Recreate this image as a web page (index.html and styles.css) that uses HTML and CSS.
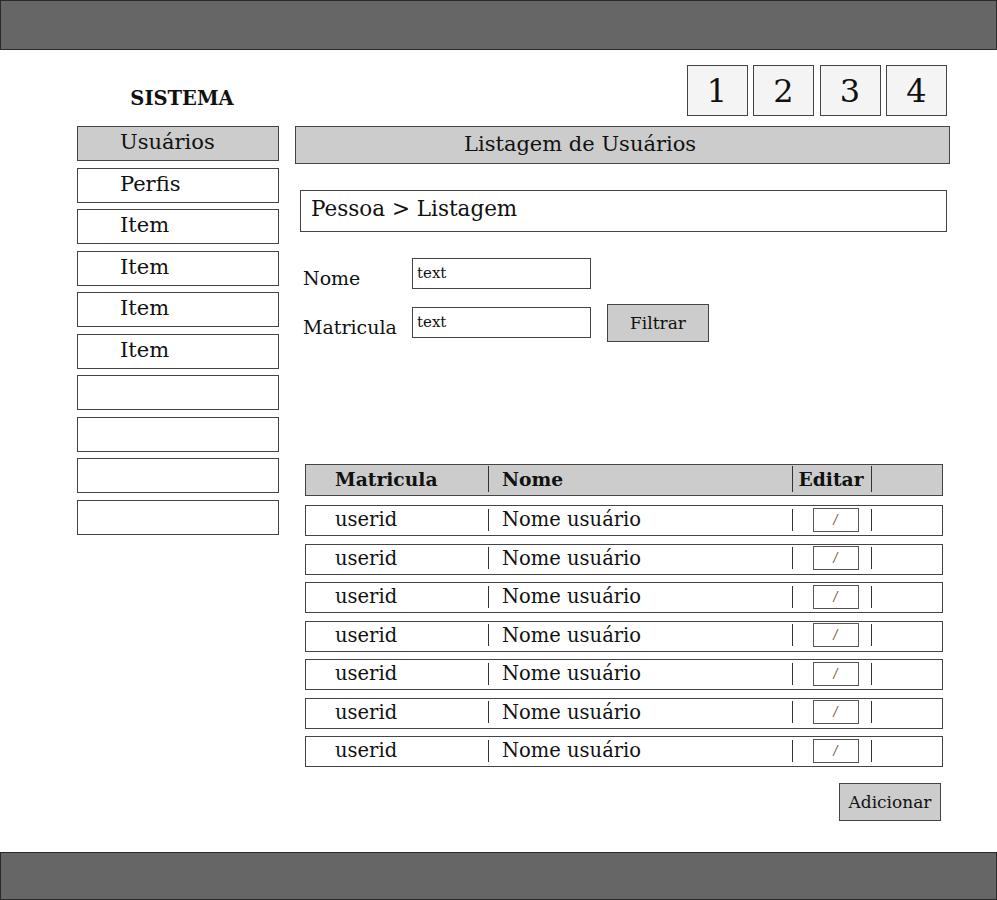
FILE: index.html
```html
<!DOCTYPE html>
<html lang="pt">
<head>
<meta charset="utf-8">
<title>Sistema</title>
<link rel="stylesheet" href="styles.css">
</head>
<body>
<div class="topbar"></div>
<main class="main">
  <div class="brand">SISTEMA</div>
  <div class="pager">
    <div class="page">1</div>
    <div class="page">2</div>
    <div class="page">3</div>
    <div class="page">4</div>
  </div>
  <nav class="sidebar">
    <div class="nav-item active">Usuários</div>
    <div class="nav-item">Perfis</div>
    <div class="nav-item">Item</div>
    <div class="nav-item">Item</div>
    <div class="nav-item">Item</div>
    <div class="nav-item">Item</div>
    <div class="nav-item"></div>
    <div class="nav-item"></div>
    <div class="nav-item"></div>
    <div class="nav-item"></div>
  </nav>
  <section class="content">
    <div class="title">Listagem de Usuários</div>
    <div class="crumb">Pessoa &gt; Listagem</div>
    <div class="form">
      <div class="form-row">
        <label class="label">Nome</label>
        <div class="input">text</div>
      </div>
      <div class="form-row">
        <label class="label">Matricula</label>
        <div class="input">text</div>
        <div class="btn filter">Filtrar</div>
      </div>
    </div>
    <div class="table">
      <div class="row head">
        <div class="cell c1">Matricula</div>
        <div class="cell c2"><span class="sep"></span>Nome</div>
        <div class="cell c3"><span class="sep"></span><span class="htext">Editar</span><span class="sep end"></span></div>
        <div class="cell c4"></div>
      </div>
      <div class="row"><div class="cell c1">userid</div><div class="cell c2"><span class="sep"></span>Nome usuário</div><div class="cell c3"><span class="sep"></span><span class="edit">/</span><span class="sep end"></span></div><div class="cell c4"></div></div>
      <div class="row"><div class="cell c1">userid</div><div class="cell c2"><span class="sep"></span>Nome usuário</div><div class="cell c3"><span class="sep"></span><span class="edit">/</span><span class="sep end"></span></div><div class="cell c4"></div></div>
      <div class="row"><div class="cell c1">userid</div><div class="cell c2"><span class="sep"></span>Nome usuário</div><div class="cell c3"><span class="sep"></span><span class="edit">/</span><span class="sep end"></span></div><div class="cell c4"></div></div>
      <div class="row"><div class="cell c1">userid</div><div class="cell c2"><span class="sep"></span>Nome usuário</div><div class="cell c3"><span class="sep"></span><span class="edit">/</span><span class="sep end"></span></div><div class="cell c4"></div></div>
      <div class="row"><div class="cell c1">userid</div><div class="cell c2"><span class="sep"></span>Nome usuário</div><div class="cell c3"><span class="sep"></span><span class="edit">/</span><span class="sep end"></span></div><div class="cell c4"></div></div>
      <div class="row"><div class="cell c1">userid</div><div class="cell c2"><span class="sep"></span>Nome usuário</div><div class="cell c3"><span class="sep"></span><span class="edit">/</span><span class="sep end"></span></div><div class="cell c4"></div></div>
      <div class="row"><div class="cell c1">userid</div><div class="cell c2"><span class="sep"></span>Nome usuário</div><div class="cell c3"><span class="sep"></span><span class="edit">/</span><span class="sep end"></span></div><div class="cell c4"></div></div>
    </div>
    <div class="actions"><div class="btn add">Adicionar</div></div>
  </section>
</main>
<div class="bottombar"></div>
</body>
</html>
```
FILE: styles.css
```css
* { box-sizing: border-box; }
html, body { margin: 0; padding: 0; }
body {
  width: 997px;
  height: 900px;
  overflow: hidden;
  background: #fff;
  color: #111;
  font-family: "DejaVu Serif", "Liberation Serif", serif;
}
.topbar {
  height: 50px;
  background: #666;
  border: 1.5px solid #2a2a2a;
}
.bottombar {
  height: 48px;
  background: #666;
  border: 1.5px solid #2a2a2a;
}
.main {
  height: 802px;
  display: grid;
  grid-template-columns: 202px 655px;
  grid-template-rows: 76px 1fr;
  column-gap: 16px;
  padding-left: 77px;
}
.brand {
  font-weight: bold;
  font-size: 19.5px;
  text-align: center;
  padding-top: 37px;
  padding-left: 8px;
  line-height: 24px;
}
.pager {
  display: flex;
  justify-content: flex-end;
  gap: 5.5px;
  padding-top: 15px;
  padding-right: 3px;
}
.page {
  width: 61px;
  height: 51px;
  background: #f4f4f4;
  border: 1.5px solid #444;
  font-size: 32px;
  display: flex;
  align-items: center;
  justify-content: center;
}
.sidebar {
  display: flex;
  flex-direction: column;
  gap: 6.5px;
}
.nav-item {
  height: 35px;
  border: 1.5px solid #444;
  background: #fff;
  font-size: 21px;
  line-height: 31px;
  padding-left: 42px;
}
.nav-item.active { background: #ccc; }
.content {
  display: flex;
  flex-direction: column;
}
.title {
  height: 38px;
  background: #ccc;
  border: 1.5px solid #444;
  font-size: 21px;
  line-height: 35px;
  padding-left: 168px;
}
.crumb {
  margin: 26px 3px 0 5px;
  height: 42px;
  border: 1.5px solid #444;
  font-size: 21.5px;
  line-height: 36px;
  padding-left: 10px;
}
.form {
  margin-top: 26px;
  margin-left: 8px;
  display: flex;
  flex-direction: column;
  gap: 18px;
}
.form-row {
  display: flex;
  align-items: center;
  height: 31px;
}
.label {
  width: 109px;
  font-size: 19px;
  padding-top: 8px;
}
.input {
  width: 179px;
  height: 31px;
  border: 1.5px solid #444;
  font-size: 15px;
  padding-left: 4px;
  line-height: 28px;
}
.btn {
  background: #ccc;
  border: 1.5px solid #444;
  font-size: 17px;
  display: flex;
  align-items: center;
  justify-content: center;
}
.filter {
  width: 102px;
  height: 38px;
  margin-left: 16px;
}
.table {
  margin-top: 126px;
  margin-left: 10px;
  width: 638px;
  display: flex;
  flex-direction: column;
}
.row {
  display: grid;
  grid-template-columns: 182px 303.5px 80px 1fr;
  height: 31px;
  border: 1.5px solid #444;
  margin-bottom: 7.5px;
  font-size: 19.5px;
  align-items: center;
}
.row.head {
  height: 32px;
  background: #ccc;
  font-weight: bold;
  font-size: 18.7px;
  margin-bottom: 9px;
}
.cell {
  display: flex;
  align-items: center;
  height: 100%;
  white-space: nowrap;
  padding-bottom: 2px;
}
.c1 { padding-left: 29px; }
.sep {
  display: inline-block;
  width: 1px;
  height: 22px;
  background: #333;
  margin-right: 13px;
  flex: none;
}
.row.head .sep { height: 26px; }
.c3 .sep { margin-right: 0; }
.c3 .sep.end { margin-left: auto; }
.htext { margin-left: 6px; }
.edit {
  margin-left: 20px;
  width: 46px;
  height: 24px;
  border: 1.5px solid #555;
  font-size: 12px;
  display: flex;
  align-items: center;
  justify-content: center;
  color: #6b4a2a;
  font-style: italic;
  font-weight: normal;
}
.actions {
  display: flex;
  justify-content: flex-end;
  margin-top: 8px;
  padding-right: 9px;
}
.add {
  width: 102px;
  height: 38px;
}
```
